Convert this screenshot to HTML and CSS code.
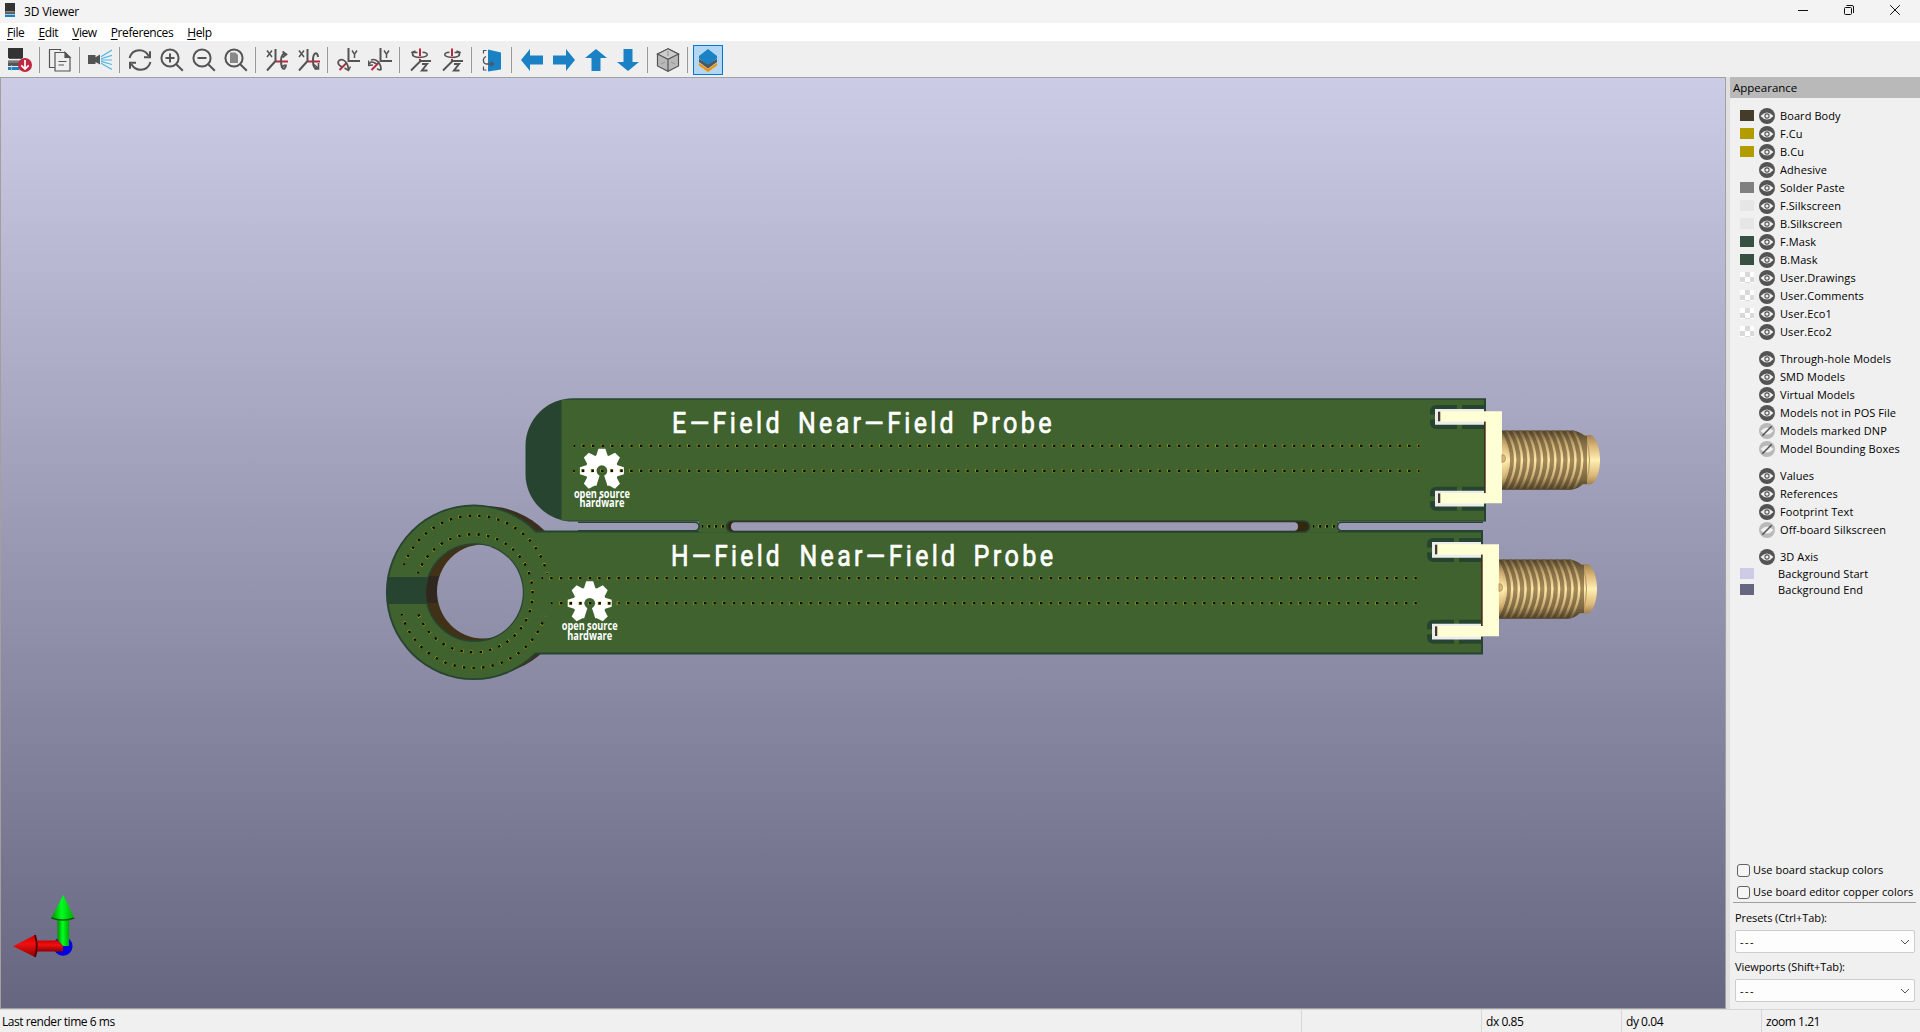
FILE: index.html
```html
<!DOCTYPE html>
<html lang="en">
<head>
<meta charset="utf-8">
<title>3D Viewer</title>
<link rel="stylesheet" href="styles.css">
</head>
<body>
<svg class="defs" width="0" height="0">
  <defs>
    <symbol id="eye" viewBox="0 0 16 16"><circle cx="8" cy="8" r="8" fill="#545454"/><path d="M1.5 8Q8 .8 14.5 8Q8 15.2 1.5 8Z" fill="#f0f0f0"/><circle cx="8" cy="8" r="2.1" fill="#f0f0f0" stroke="#545454" stroke-width="1.1"/></symbol>
    <symbol id="hidden" viewBox="0 0 16 16"><circle cx="8" cy="8" r="8" fill="#b9b9b9"/><path d="M1.5 8Q8 .8 14.5 8Q8 15.2 1.5 8Z" fill="#f0f0f0"/><path d="M3.3 12.7 12.7 3.3" stroke="#545454" stroke-width="1.6"/></symbol>
  </defs>
</svg>
<div class="window">
  <header class="titlebar">
    <svg class="app-icon" viewBox="0 0 10 14"><path d="M0 0h10v8H0z" fill="#333"/><path d="M0 8h10v3H0z" fill="#606060"/><path d="M1 8.6h8" stroke="#aaa" stroke-width=".7"/><path d="M0 11.6h10V14H0z" fill="#1a81c4"/></svg>
    <span class="title">3D Viewer</span>
    <div class="window-buttons">
      <svg viewBox="0 0 12 12"><path d="M1 6.500h10"/></svg>
      <svg viewBox="0 0 12 12"><rect x="1.500" y="3.500" width="7" height="7" rx="1"/><path d="M3.500 1.500H9q1.500 0 1.500 1.500V9"/></svg>
      <svg viewBox="0 0 12 12"><path d="M1.200 1.200l9.600 9.600M10.800 1.200l-9.600 9.600"/></svg>
    </div>
  </header>
  <nav class="menubar"><span><u>F</u>ile</span><span><u>E</u>dit</span><span><u>V</u>iew</span><span><u>P</u>references</span><span><u>H</u>elp</span></nav>
  <div class="toolbar">
    <span class="tool"><svg viewBox="2 0 24 24"><path d="M2 0h15v10H2z" fill="#333"/><path d="M3 10h13v1H3z" fill="#545454"/><path d="M2 12.500h15V18H2z" fill="#545454"/><path d="M2 14h15" stroke="#999"/><path d="M2 19h15v3H2z" fill="#1a81c4"/><path d="M5.500 17v6M13.500 17v6" stroke="#ccc" stroke-width=".7"/><circle cx="19" cy="17" r="7" fill="#bf2641"/><path d="M19 12v9M15.300 17.300l3.700 3.700 3.700-3.700" fill="none" stroke="#fff" stroke-width="1.700"/></svg></span>
    <i class="sep"></i>
    <span class="tool"><svg class="line" viewBox="0 0 24 24"><path d="M7 19.500H1.500v-18h11V3" stroke-width="1.200"/><path d="M7 4.500h10l5 5V23H7z" fill="#efefef" stroke-width="1.200"/><path d="M17 4.500v5h5z" fill="#545454"/><path d="M10.500 13.500h8M10.500 17h5.500"/></svg></span>
    <i class="sep"></i>
    <span class="tool"><svg viewBox="0 0 24 24"><path d="M0 7h7.500v2.200L12 6.500v10L7.500 14v2H0z" fill="#545454"/><path d="M13 8.800 24 2M13 10.700 24 7.300M13 12h11M13 13.300 24 16.500M13 15.200 24 21.500" stroke="#50b7e4" stroke-width="1.200"/></svg></span>
    <i class="sep"></i>
    <span class="tool"><svg class="line thick" viewBox="0 0 24 24"><path d="M1.500 10C3 5 7 2.300 11.500 2.300c4.200 0 7.500 2.500 9.300 6M22.500 14c-1.500 5-5.500 7.700-10 7.700-4.200 0-7.500-2.500-9.300-6"/><path d="M22 3.200v6h-6M2 20.800v-6h6" stroke-width="2"/></svg></span>
    <span class="tool"><svg class="line thick" viewBox="0 0 24 24"><circle cx="10" cy="10" r="8.600"/><path d="M16.200 16.200 22.800 22.800"/><path d="M5.500 10h9M10 5.500v9"/></svg></span>
    <span class="tool"><svg class="line thick" viewBox="0 0 24 24"><circle cx="10" cy="10" r="8.600"/><path d="M16.200 16.200 22.800 22.800M5.500 10h9"/></svg></span>
    <span class="tool"><svg class="line thick" viewBox="0 0 24 24"><circle cx="10" cy="10" r="8.600"/><path d="M16.200 16.200 22.800 22.800"/><path d="M6 4.500h5.500l2.500 2.500v8H6z" fill="#888" stroke="none"/></svg></span>
    <i class="sep"></i>
    <span class="tool"><svg class="line thick" viewBox="0 0 24 24"><path d="M11.500 1v12L3 22.500"/><path d="M12 13.500h12" stroke="#bf2641"/><path d="M3 2.500 8 9M8 2.500 3 9" stroke-width="1.500"/><path d="M22.500 6.500c-3-2-5.500 1-5.500 6.500s2 9 3.500 7.500c1-1 1.500-2.500 1.500-4"/><path d="M18.500 3.500l4 3-4 3M21 17l-4 2.500" stroke-width="1.600"/></svg></span>
    <span class="tool"><svg class="line thick" viewBox="0 0 24 24"><path d="M11.500 1v12L3 22.500"/><path d="M12 13.500h12" stroke="#bf2641"/><path d="M3 2.500 8 9M8 2.500 3 9" stroke-width="1.500"/><path d="M22 9c-.5-6-5-5-5 3.500 0 6 1.500 8.500 4 7.500"/><path d="M18 16.500l4.500 4M22.500 15v6h-4" stroke-width="1.600"/></svg></span>
    <i class="sep"></i>
    <span class="tool"><svg class="line thick" viewBox="0 0 24 24"><path d="M12.500 0v13H24"/><path d="M11 14.500 3.500 22" stroke="#bf2641"/><path d="M16 2.500l2.500 3.700 2.500-3.700M18.500 6v4" stroke-width="1.500"/><path d="M3 12.500c4-3 9 2 9.500 9M3 12.500c-2.500 3 1 6 4 6.500" stroke-width="1.700"/><path d="M8.500 20l4 2.500 2-4" stroke-width="1.500"/></svg></span>
    <span class="tool"><svg class="line thick" viewBox="0 0 24 24"><path d="M12.500 0v13H24"/><path d="M11 14.500 3.500 22" stroke="#bf2641"/><path d="M16 2.500l2.500 3.700 2.500-3.700M18.500 6v4" stroke-width="1.500"/><path d="M3 12c5-2 10 3 10 9.500q-2 1-4-1M1.500 16.500c0-3 3-3.500 7-.5" stroke-width="1.700"/><path d="M.5 12.500v5l4.500-.5" stroke-width="1.500"/></svg></span>
    <i class="sep"></i>
    <span class="tool"><svg class="line thick" viewBox="0 0 24 24"><path d="M12 .5V8M12 11v2" stroke="#bf2641"/><path d="M23 13H12.500L3 22.500M14 16h5l-5 6.500h5.500"/><path d="M9.500 4.500H4.500M14.500 4.200c6 .3 7 4.300-1 5.100-5 .5-9-.8-9.200-2.800" stroke-width="1.600"/><path d="M7.500 3 4 4.500l1.500 3.500" stroke-width="1.600"/></svg></span>
    <span class="tool"><svg class="line thick" viewBox="0 0 24 24"><path d="M12 .5V8M12 11v2" stroke="#bf2641"/><path d="M23 13H12.500L3 22.500M14 16h5l-5 6.500h5.500"/><path d="M14.500 4.500h5M9.500 4.200c-6 .3-7 4.300 1 5.100 5 .5 9-.8 9.200-2.800" stroke-width="1.600"/><path d="M16.500 3 20 4.500 18.500 8" stroke-width="1.600"/></svg></span>
    <i class="sep"></i>
    <span class="tool"><svg class="line" viewBox="0 0 24 24"><path d="M8 1.500l13 3v17l-13 2z" fill="#1a81c4" stroke="none"/><path d="M6.500 2.500H3.500v3M3.500 18.500v3.500h3"/><path d="M6 8.500C2.500 10 2.500 15 6 16h7M10.500 13.500l3 2.500-3 2" stroke-width="1.300"/></svg></span>
    <i class="sep"></i>
    <span class="tool"><svg class="blue" viewBox="0 0 24 24"><path d="M1 12 10 1v6.500h13v9H10V23z"/></svg></span>
    <span class="tool"><svg class="blue" viewBox="0 0 24 24"><path d="M23 12 14 1v6.500H1v9h13V23z"/></svg></span>
    <span class="tool"><svg class="blue" viewBox="0 0 24 24"><path d="M12 1 23 10h-6.500v13h-9V10H1z"/></svg></span>
    <span class="tool"><svg class="blue" viewBox="0 0 24 24"><path d="M12 23 23 14h-6.500V1h-9v13H1z"/></svg></span>
    <i class="sep"></i>
    <span class="tool"><svg class="line" viewBox="0 0 24 24"><path d="M12 .8 22.500 6v12L12 23.300 1.500 18V6z" fill="#b9b9b9"/><path d="M12 .8 22.500 6 12 11.300 1.500 6z" fill="#ccc"/><path d="M12 11.300v12"/><path d="M12 3v5M5 16l4-2M19 16l-4-2" stroke="#999"/></svg></span>
    <i class="sep"></i>
    <span class="tool active"><svg viewBox="0 0 24 24"><path d="M3 15v2.500L12 24l9-6.500V15l-9 6z" fill="#f29100"/><path d="M3 11v3l9 6.500 9-6.500v-3l-9 5z" fill="#545454"/><path d="M12 1l9 7v2.500L12 17l-9-6.500V8z" fill="#1a81c4"/></svg></span>
  </div>
  <main class="content">
    <section class="viewport">
      <svg class="scene" viewBox="1 78 1724 930">
        <defs>
          <linearGradient id="brass" x1="0" y1="430" x2="0" y2="490" gradientUnits="userSpaceOnUse"><stop offset="0" stop-color="#4f4129"/><stop offset=".2" stop-color="#7f6a43"/><stop offset=".5" stop-color="#a68b59"/><stop offset=".8" stop-color="#7f6a43"/><stop offset="1" stop-color="#493c25"/></linearGradient>
          <linearGradient id="shine" x1="0" y1="430" x2="0" y2="490" gradientUnits="userSpaceOnUse"><stop offset="0" stop-color="#695636"/><stop offset=".2" stop-color="#bf9f67"/><stop offset=".5" stop-color="#ffe9aa"/><stop offset=".8" stop-color="#c8a76c"/><stop offset="1" stop-color="#5b4a2d"/></linearGradient>
          <linearGradient id="tip" x1="0" y1="434" x2="0" y2="486" gradientUnits="userSpaceOnUse"><stop offset="0" stop-color="#9c7f4e"/><stop offset=".25" stop-color="#deba7a"/><stop offset=".5" stop-color="#fff0b2"/><stop offset=".8" stop-color="#dcb878"/><stop offset="1" stop-color="#967747"/></linearGradient>
          <linearGradient id="greenShaft"><stop offset="0" stop-color="#008f00"/><stop offset=".45" stop-color="#0f2"/><stop offset="1" stop-color="#00a800"/></linearGradient>
          <linearGradient id="redShaft" x2="0" y2="1"><stop offset="0" stop-color="#d00000"/><stop offset=".4" stop-color="#f01010"/><stop offset="1" stop-color="#900000"/></linearGradient>
          <clipPath id="hole"><circle cx="474.500" cy="592.500" r="48.300"/></clipPath>
          <clipPath id="thread"><path d="M1502 430.500h71q7 1 12 5.500h2v48h-4q-5 5-12 5.700h-69z"/></clipPath>
          <linearGradient id="sky" x1="0" y1="78" x2="0" y2="1008" gradientUnits="userSpaceOnUse"><stop offset="0" stop-color="#cccce6"/><stop offset="1" stop-color="#666680"/></linearGradient>
          <g id="gear">
            <circle r="16.300" fill="#fff"/>
            <g fill="#fff">
              <path id="tooth" d="M-6-14-3.500-22h7L6-14z"/>
              <use href="#tooth" transform="rotate(45)"/><use href="#tooth" transform="rotate(90)"/><use href="#tooth" transform="rotate(135)"/><use href="#tooth" transform="rotate(225)"/><use href="#tooth" transform="rotate(270)"/><use href="#tooth" transform="rotate(315)"/>
            </g>
            <circle r="5.400" fill="#3f622f"/><path d="M-2 4-6.500 18h13L2 4z" fill="#3f622f"/>
            <path class="via-gold" d="M-28.800 0H29"/><path class="via" d="M-28.800 0H29"/>
            <text class="oshw" x="-28" y="27" textLength="56" lengthAdjust="spacingAndGlyphs">open source</text>
            <text class="oshw" x="-22.500" y="36.500" textLength="45" lengthAdjust="spacingAndGlyphs">hardware</text>
          </g>
          <g id="pad">
            <path d="M1484 405h-47q-7 0-7 7v10q0 7 7 7h47z" fill="#274431"/>
            <path d="M1457 405h5v24h-5zM1430 414.500h6v5h-6z" fill="#3f622f"/>
            <path d="M1435 409h49v15.700h-49z" fill="#ececec"/>
            <path d="M1440 411.300h46v10.400h-46z" fill="#ffffd5"/>
            <path d="M1438 411.700h2.300v9.600h-2.300z" fill="#443a2c"/>
          </g>
          <g id="bracket">
            <use href="#pad"/><use href="#pad" y="81.700"/>
            <path d="M1484 421.700h2v71.300h-2z" fill="#452f1f"/>
            <path d="M1485.700 411.300H1502v92h-16.300z" fill="#ffffd5"/>
          </g>
          <g id="sma">
            <path d="M1582 435h8c5 0 10 12 10 25s-5 24.500-10 24.500h-8z" fill="url(#tip)"/>
            <path d="M1586 437q7 23 0 46" fill="none" stroke="#b59561"/>
            <g clip-path="url(#thread)">
              <path d="M1500 430h88v60h-88z" fill="url(#brass)"/>
              <path d="M1500 430q20 30 0 60" fill="url(#tip)"/>
              <g fill="none" stroke="url(#shine)" stroke-width="2.400">
                <path d="M1499 429q19 31 0 62M1505.700 429q19 31 0 62M1512.400 429q19 31 0 62M1519.100 429q19 31 0 62M1525.800 429q19 31 0 62M1532.500 429q19 31 0 62M1539.200 429q19 31 0 62M1545.900 429q19 31 0 62M1552.600 429q19 31 0 62M1559.300 429q19 31 0 62M1566 429q19 31 0 62M1572.700 429q19 31 0 62"/>
              </g>
            </g>
            <path d="M1502 454.500a3.500 4 0 0 1 0 8z" fill="#dcb67e" stroke="#ae8d57" stroke-width=".8"/>
          </g>
        </defs>

        <circle cx="485" cy="590.500" r="84.500" fill="#3c2e1c"/>
        <path d="M1486 398.200v123.300H573.500A48 47.500 0 0 1 525.500 474v-28A48 47.500 0 0 1 573.500 398.200z" fill="#274431"/>
        <path d="M561.500 399.800H1484v120.600H561.500z" fill="#3f622f"/>
        <circle cx="473.700" cy="592.300" r="87.800" fill="#274431"/>
        <circle cx="473.700" cy="592.300" r="86" fill="#3f622f"/>
        <path d="M535 530.500h948v124H535z" fill="#274431"/>
        <path d="M530 532.500h951v120H530z" fill="#3f622f"/>
        <path d="M387 577H430v27h-43z" fill="#274431"/>
        <path d="M699 519.500h639v13H699z" fill="#3f622f"/>
        <rect x="726.500" y="521" width="583" height="11" rx="5.500" fill="#32270f" stroke="#274431" stroke-width="1.500"/>
        <rect x="731" y="522.300" width="567" height="8.400" rx="4" fill="#9b9bb5"/>
        <path d="M578 522.300h116.500q4.500 0 4.500 4.200t-4.500 4.200H578" fill="#9b9bb5" stroke="#274431" stroke-width="1.500"/>
        <path d="M1483 522.300h-141q-4.500 0-4.500 4.200t4.500 4.200h141" fill="#9b9bb5" stroke="#274431" stroke-width="1.500"/>
        <circle cx="474.500" cy="592.500" r="48.600" fill="#403117" stroke="#274431" stroke-width="1.500"/>
        <g clip-path="url(#hole)"><path d="M424 576h30v27h-30z" fill="#30271f"/><ellipse cx="483" cy="591.500" rx="46" ry="47" fill="url(#sky)"/></g>

        <path class="via-gold" d="M573.500 445.700h846M573.500 470.700h846M541.400 578.300h876M551 603.300h866M404 565A74.600 74.600 0 0 1 547 574M401.600 614A75 75 0 0 0 545 616M418 573.500A59 59 0 1 1 417 610"/>
        <path class="via" d="M573.500 445.700h846M573.500 470.700h846M541.400 578.300h876M551 603.300h866M404 565A74.600 74.600 0 0 1 547 574M401.600 614A75 75 0 0 0 545 616M418 573.500A59 59 0 1 1 417 610"/>
        <path class="via-gold tight" d="M702 526.400h22M1313 526.400h22"/><path class="via tight" d="M702 526.400h22M1313 526.400h22"/>
        <use href="#gear" x="601.900" y="470.700"/>
        <use href="#gear" x="589.700" y="603.300"/>

        <g class="silk">
          <text x="672" y="433" textLength="111" lengthAdjust="spacingAndGlyphs">E—Field</text>
          <text x="798" y="433" textLength="159" lengthAdjust="spacingAndGlyphs">Near—Field</text>
          <text x="972" y="433" textLength="83" lengthAdjust="spacingAndGlyphs">Probe</text>
          <text x="671" y="566.200" textLength="112" lengthAdjust="spacingAndGlyphs">H—Field</text>
          <text x="799.500" y="566.200" textLength="159" lengthAdjust="spacingAndGlyphs">Near—Field</text>
          <text x="973.500" y="566.200" textLength="83" lengthAdjust="spacingAndGlyphs">Probe</text>
        </g>

        <use href="#bracket"/><use href="#sma"/>
        <use href="#bracket" x="-3" y="133"/><use href="#sma" x="-3" y="129"/>

        <circle cx="63" cy="946.300" r="9.500" fill="#0000e0"/>
        <path d="M57.500 916h11.500v30h-6l-5.500-6z" fill="url(#greenShaft)"/>
        <path d="M36 940.500h22l5 5.500v5.500H36z" fill="url(#redShaft)"/>
        <path d="M63.300 895 74.300 918q-11 3.500-23 0z" fill="url(#greenShaft)"/>
        <path d="M51.300 918q12 4 23 0" fill="none" stroke="#006000" stroke-width="1.500"/>
        <path d="M13 946.300 35 935q3 11 0 22z" fill="url(#redShaft)"/>
        <path d="M35 935q3.500 11 0 22" fill="none" stroke="#500000" stroke-width="1.800"/>
      </svg>
    </section>
    <aside class="appearance">
      <h1>Appearance</h1>
      <ul class="rows">
        <li><i class="swatch body"></i><svg><use href="#eye"/></svg>Board Body</li>
        <li><i class="swatch copper"></i><svg><use href="#eye"/></svg>F.Cu</li>
        <li><i class="swatch copper"></i><svg><use href="#eye"/></svg>B.Cu</li>
        <li><i class="swatch"></i><svg><use href="#eye"/></svg>Adhesive</li>
        <li><i class="swatch paste"></i><svg><use href="#eye"/></svg>Solder Paste</li>
        <li><i class="swatch silkscreen"></i><svg><use href="#eye"/></svg>F.Silkscreen</li>
        <li><i class="swatch silkscreen"></i><svg><use href="#eye"/></svg>B.Silkscreen</li>
        <li><i class="swatch mask"></i><svg><use href="#eye"/></svg>F.Mask</li>
        <li><i class="swatch mask"></i><svg><use href="#eye"/></svg>B.Mask</li>
        <li><i class="swatch clear"></i><svg><use href="#eye"/></svg>User.Drawings</li>
        <li><i class="swatch clear"></i><svg><use href="#eye"/></svg>User.Comments</li>
        <li><i class="swatch clear"></i><svg><use href="#eye"/></svg>User.Eco1</li>
        <li><i class="swatch clear"></i><svg><use href="#eye"/></svg>User.Eco2</li>
      </ul>
      <ul class="rows">
        <li><i class="swatch"></i><svg><use href="#eye"/></svg>Through-hole Models</li>
        <li><i class="swatch"></i><svg><use href="#eye"/></svg>SMD Models</li>
        <li><i class="swatch"></i><svg><use href="#eye"/></svg>Virtual Models</li>
        <li><i class="swatch"></i><svg><use href="#eye"/></svg>Models not in POS File</li>
        <li><i class="swatch"></i><svg><use href="#hidden"/></svg>Models marked DNP</li>
        <li><i class="swatch"></i><svg><use href="#hidden"/></svg>Model Bounding Boxes</li>
      </ul>
      <ul class="rows">
        <li><i class="swatch"></i><svg><use href="#eye"/></svg>Values</li>
        <li><i class="swatch"></i><svg><use href="#eye"/></svg>References</li>
        <li><i class="swatch"></i><svg><use href="#eye"/></svg>Footprint Text</li>
        <li><i class="swatch"></i><svg><use href="#hidden"/></svg>Off-board Silkscreen</li>
      </ul>
      <ul class="rows">
        <li><i class="swatch"></i><svg><use href="#eye"/></svg>3D Axis</li>
        <li class="background"><i class="swatch start"></i>Background Start</li>
        <li class="background"><i class="swatch end"></i>Background End</li>
      </ul>
      <div class="options">
        <label><i class="box"></i>Use board stackup colors</label>
        <label><i class="box"></i>Use board editor copper colors</label>
      </div>
      <div class="presets">
        <span>Presets (Ctrl+Tab):</span>
        <div class="select">---<svg viewBox="0 0 10 6"><path d="M1 1l4 4 4-4"/></svg></div>
        <span>Viewports (Shift+Tab):</span>
        <div class="select">---<svg viewBox="0 0 10 6"><path d="M1 1l4 4 4-4"/></svg></div>
      </div>
    </aside>
  </main>
  <footer class="statusbar"><span>Last render time 6 ms</span><span></span><span>dx 0.85</span><span>dy 0.04</span><span>zoom 1.21</span></footer>
</div>
</body>
</html>
```
FILE: styles.css
```css
* { box-sizing: border-box; }
body { margin: 0; background: #f0f0f0; color: #000; font: 12px/16px "Open Sans", "Noto Sans", sans-serif; }
.defs { position: absolute; }
.window { display: grid; grid-template-rows: 23px 18px 36px 932px 23px; width: 1920px; height: 1032px; overflow: hidden; }

.titlebar { display: flex; align-items: center; padding: 0 19px 0 5px; background: #f3f3f3; }
.app-icon { width: 10px; height: 14px; margin-top: -3px; }
.title { margin-left: 9px; letter-spacing: -.18px; }
.window-buttons { display: flex; gap: 34px; margin-left: auto; margin-top: -3px; }
.window-buttons svg { width: 12px; height: 12px; fill: none; stroke: #111; }

.menubar { display: flex; gap: 14px; align-items: center; padding: 2px 0 0 7px; background: #fff; letter-spacing: -.4px; }
.menubar u { text-underline-offset: 2px; }

.toolbar { display: flex; align-items: center; padding: 2px 4px 0; background: #efefef; }
.tool { display: flex; align-items: center; justify-content: center; width: 32px; height: 30px; }
.tool svg { width: 24px; height: 24px; }
.tool.active { width: 30px; margin-left: 1px; background: #b3d7f3; border: 1px solid #0078d7; }
.sep { width: 8px; height: 26px; background: linear-gradient(90deg, transparent 3px, #999 3px, #999 4px, transparent 4px); }
.line { fill: none; stroke: #545454; stroke-width: 1.2; }
.line.thick { stroke-width: 2; }
.blue { fill: #1a81c4; }

.content { display: grid; grid-template-columns: 1726px 194px; }
.viewport { border: 1px solid #a0a0a0; background: linear-gradient(#cccce6, #666680); }
.scene { display: block; width: 1724px; height: 930px; }
.silk text { fill: #fff; stroke: #fff; stroke-width: .7px; stroke-linejoin: round; font: 400 30px Roboto, sans-serif; letter-spacing: 4px; }
.oshw { fill: #fff; font: 700 12px "Open Sans", sans-serif; }
.via-gold, .via { fill: none; stroke: #a5a41b; stroke-width: 3.2; stroke-dasharray: 3 6.602; stroke-dashoffset: 1.5; }
.via { stroke: #080c02; stroke-width: 2.6; stroke-dasharray: 2.4 7.202; stroke-dashoffset: .8; }
.via-gold.tight { stroke-dasharray: 2.6 4.3; }
.via.tight { stroke-dasharray: 2 4.9; }

.appearance { display: flex; flex-direction: column; border-left: 4px solid #e0e0e0; background: #f0f0f0; font-size: 11px; }
.appearance h1 { height: 21px; margin: 0 0 9px; padding-left: 3px; background: #b9b9b9; font: 11.5px/21px "Open Sans", sans-serif; }
.rows { margin: 0 0 9px; padding: 0; list-style: none; }
.rows li { display: flex; align-items: center; gap: 5px; height: 18px; padding-left: 10px; letter-spacing: .08px; white-space: nowrap; }
.rows svg { width: 16px; height: 16px; }
.rows .background { height: 16px; gap: 24px; }
.swatch { width: 14px; height: 11px; margin-bottom: 2px; }
.body { background: #443b29; }
.copper { background: #b29c00; }
.paste { background: #808080; }
.silkscreen { background: #e6e6e6; }
.mask { background: #365141; }
.clear { background: repeating-conic-gradient(#d9d9d9 0 25%, #fff 0 50%) 0 0 / 10px 10px; }
.start { background: #cccce6; }
.end { background: #666680; }
.options { display: flex; flex-direction: column; gap: 6px; margin: auto 4px 0 3px; padding: 0 0 2px 4px; border-bottom: 1px solid #a0a0a0; letter-spacing: .03px; }
.options label { display: flex; align-items: center; gap: 3px; height: 16px; white-space: nowrap; }
.box { width: 13px; height: 13px; border: 1px solid #626262; border-radius: 3px; background: #f5f5f5; }
.presets { display: flex; flex-direction: column; padding: 7px 5px 7px; }
.presets > span { height: 17px; margin-bottom: 3px; letter-spacing: -.08px; }
.select { display: flex; align-items: center; justify-content: space-between; height: 23px; margin-bottom: 6px; padding: 0 4px; border: 1px solid #ccc; border-radius: 2px; background: #fdfdfd; letter-spacing: 1.5px; }
.select:last-child { margin-bottom: 0; }
.select svg { width: 10px; height: 6px; fill: none; stroke: #555; }

.statusbar { display: grid; grid-template-columns: 1301px 180px 140px 140px 159px; border-top: 1px solid #d7d7d7; background: #f0f0f0; line-height: 24px; letter-spacing: -.45px; }
.statusbar span { padding-left: 4px; border-left: 1px solid #d7d7d7; }
.statusbar span:first-child { padding-left: 2px; border: 0; }
```
